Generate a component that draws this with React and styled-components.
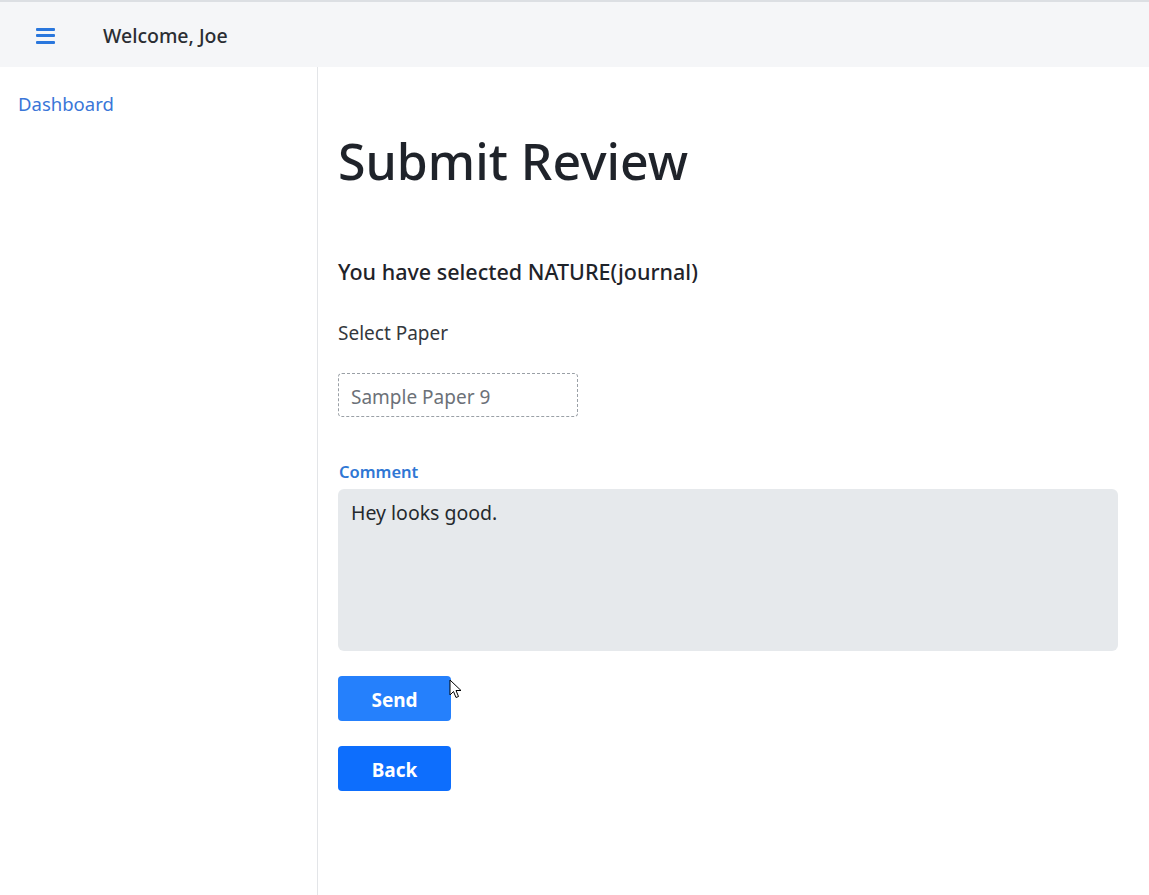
import React from 'react'
import styled, { createGlobalStyle } from 'styled-components'

const GlobalStyle = createGlobalStyle`
  body {
    margin: 0;
    font-family: "Noto Sans", "Open Sans", sans-serif;
    color: #212529;
    background: #fff;
  }
`

const Page = styled.div`
  border-top: 2px solid #dcdfe3;
  min-height: 893px;
  display: flex;
  flex-direction: column;
`

const TopBar = styled.header`
  height: 65px;
  background-color: #f5f6f8;
  display: flex;
  align-items: center;
  padding-left: 36px;
`

const MenuButton = styled.button`
  background: none;
  border: 0;
  padding: 0;
  width: 19px;
  height: 16px;
  display: flex;
  flex-direction: column;
  justify-content: space-between;
  margin: 2px 48px 0 0;
  span {
    display: block;
    height: 3px;
    border-radius: 1px;
    background: #2a77dd;
  }
`

const Welcome = styled.div`
  font-size: 19.5px;
  font-weight: 500;
  color: #2b2e33;
  margin-top: 2px;
`

const Body = styled.div`
  flex: 1;
  display: flex;
`

const Sidebar = styled.nav`
  width: 318px;
  flex-shrink: 0;
  border-right: 1px solid #e3e5e8;
  padding: 24px 18px;
  box-sizing: border-box;
`

const NavLink = styled.a`
  color: #3a76d8;
  font-size: 18.5px;
  text-decoration: none;
`

const Main = styled.main`
  flex: 1;
  padding: 64px 31px 0 20px;
`

const Title = styled.h1`
  margin: 0 0 68px;
  font-size: 50px;
  font-weight: 500;
  line-height: 60px;
  color: #1f232a;
`

const Subtitle = styled.h5`
  margin: 0 0 35px;
  font-size: 21.5px;
  font-weight: 500;
  line-height: 26px;
  color: #1f232a;
`

const FieldLabel = styled.label`
  display: block;
  font-size: 19px;
  line-height: 26px;
  color: #34383d;
  margin-bottom: 27px;
`

const PaperInput = styled.input`
  display: block;
  width: 240px;
  height: 44px;
  box-sizing: border-box;
  border: 1px dashed #9aa0a6;
  border-radius: 4px;
  padding: 3px 12px 0;
  font-family: inherit;
  font-size: 19px;
  color: #6c7178;
  margin-bottom: 44px;
`

const CommentLabel = styled.label`
  display: block;
  font-size: 16.5px;
  line-height: 22px;
  font-weight: 600;
  color: #2f77d4;
  margin: 0 0 6px 1px;
`

const Comment = styled.textarea`
  display: block;
  width: 100%;
  height: 162px;
  box-sizing: border-box;
  border: 0;
  border-radius: 6px;
  background: #e6e9ec;
  padding: 10px 13px;
  font-family: inherit;
  font-size: 19.5px;
  color: #25292e;
  resize: none;
  margin-bottom: 25px;
`

const ButtonWrap = styled.div`
  position: relative;
  width: 113px;
  margin-bottom: 25px;
`

const Button = styled.button`
  display: block;
  width: 113px;
  height: 45px;
  border: 0;
  border-radius: 4px;
  padding: 3px 0 0;
  background: ${p => (p.$hover ? '#2580fc' : '#0d6efd')};
  color: #fff;
  font-family: inherit;
  font-size: 19px;
  font-weight: 700;
  cursor: pointer;
`

const Pointer = styled.svg`
  position: absolute;
  left: 111px;
  top: 3px;
  pointer-events: none;
`

export default function App() {
  return (
    <>
      <GlobalStyle />
      <Page>
        <TopBar>
          <MenuButton aria-label="menu">
            <span />
            <span />
            <span />
          </MenuButton>
          <Welcome>Welcome, Joe</Welcome>
        </TopBar>
        <Body>
          <Sidebar>
            <NavLink href="#">Dashboard</NavLink>
          </Sidebar>
          <Main>
            <Title>Submit Review</Title>
            <Subtitle>You have selected NATURE(journal)</Subtitle>
            <FieldLabel>Select Paper</FieldLabel>
            <PaperInput defaultValue="Sample Paper 9" />
            <CommentLabel>Comment</CommentLabel>
            <Comment defaultValue="Hey looks good." />
            <ButtonWrap>
              <Button $hover>Send</Button>
              <Pointer width="13" height="20" viewBox="0 0 13 20">
                <path d="M1 1 L1 16 L4.5 12.5 L7 18.5 L9.5 17.5 L7 11.5 L12 11.5 Z" fill="#fff" stroke="#000" strokeWidth="1" strokeLinejoin="round" />
              </Pointer>
            </ButtonWrap>
            <ButtonWrap>
              <Button>Back</Button>
            </ButtonWrap>
          </Main>
        </Body>
      </Page>
    </>
  )
}
